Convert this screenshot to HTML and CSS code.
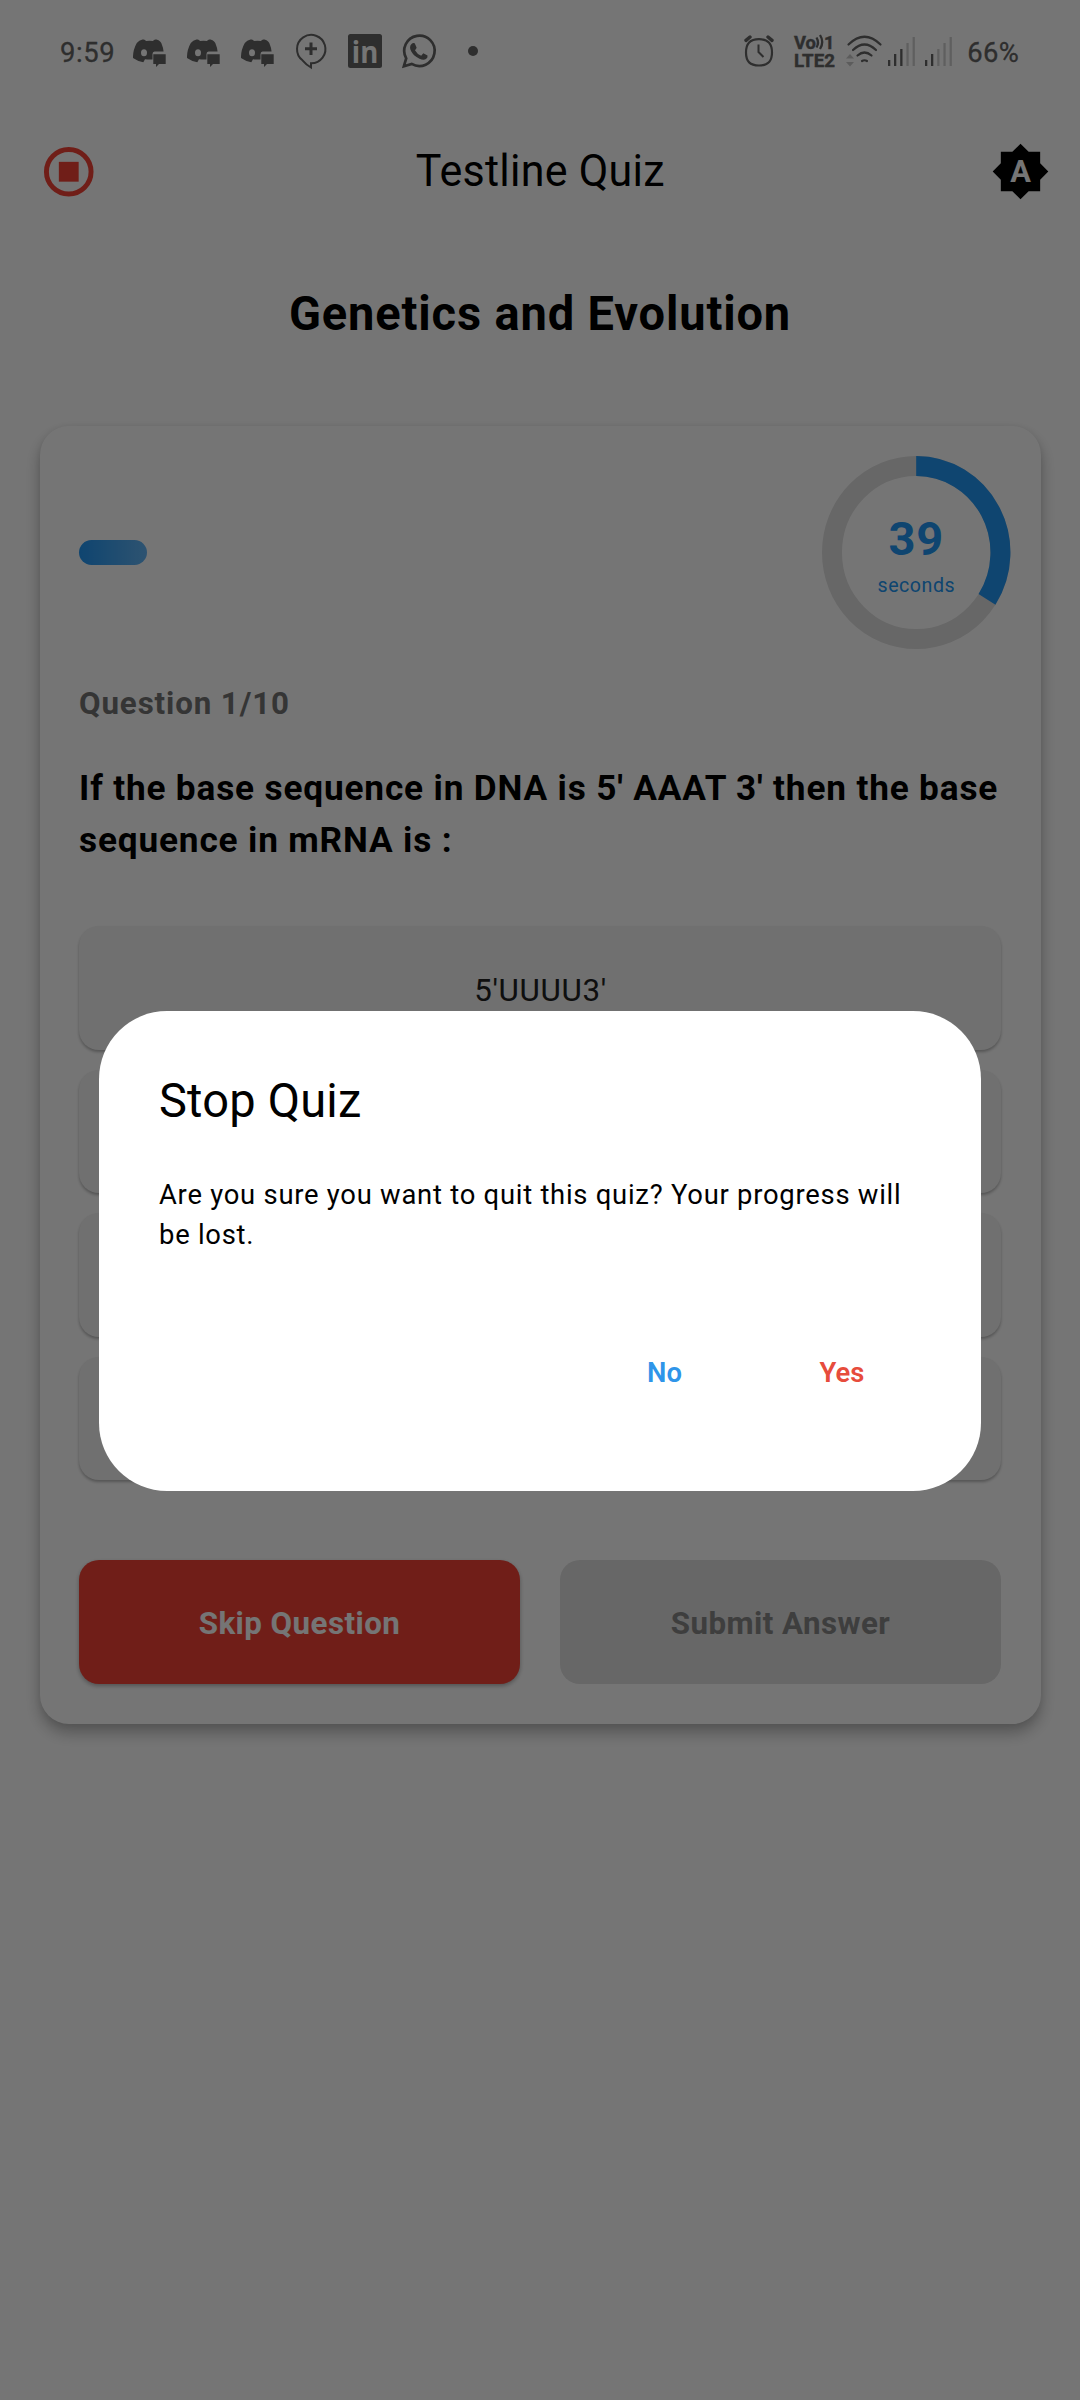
FILE: index.html
```
<!DOCTYPE html>
<html lang="en">
<head>
<meta charset="utf-8">
<title>Testline Quiz</title>
<link rel="stylesheet" href="styles.css">
</head>
<body>
<svg class="defs" width="0" height="0" aria-hidden="true">
  <symbol id="discord" viewBox="0 0 33 28">
    <path fill="currentColor" fill-rule="evenodd" d="M9.500 .6Q12 0 13 2Q16.500 1.500 20 2Q21 0 23.500 .6Q28 1.800 29 6Q30.300 9 30.600 12.500H21.500Q19.500 12.500 19.500 15V20.500Q16 20.800 12 20.300L10.300 23.200Q5 22.500 0 19Q-.2 11 3.800 4Q6 1.500 9.500 .6ZM11 10.300A3 3.500 0 1 0 11 17.300A3 3.500 0 1 0 11 10.300Z"/>
    <path fill="currentColor" d="M20.300 15.200H32.700V25H26L23 28V25H20.300Z"/>
  </symbol>
</svg>

<div class="screen">
  <header class="status">
    <div class="status-group">
      <span class="status-text clock">9:59</span>
      <svg class="discord" width="33" height="28"><use href="#discord"/></svg>
      <svg class="discord" width="33" height="28"><use href="#discord"/></svg>
      <svg class="discord" width="33" height="28"><use href="#discord"/></svg>
      <svg class="bubble" width="32" height="36" viewBox="0 0 32 36">
        <path fill="none" stroke="currentColor" stroke-width="2" d="M16 34.500V30.300A14.200 14.200 0 1 0 7.500 27.300Q11 31.500 16 34.500Z"/>
        <path stroke="currentColor" stroke-width="3" d="M16 9.500V22M10 15.700H22"/>
      </svg>
      <svg class="linkedin" width="34" height="34" viewBox="0 0 34 34">
        <rect width="34" height="34" rx="2.500" fill="currentColor"/>
        <text class="linkedin-text" x="3.800" y="28.700" textLength="26.500" lengthAdjust="spacingAndGlyphs">in</text>
      </svg>
      <svg class="whatsapp" width="34" height="34" viewBox="0 0 34 34">
        <path fill="none" stroke="currentColor" stroke-width="2.700" d="M1.900 32.200L4.200 24.300A15.200 15.200 0 1 1 9.700 29.900Z"/>
        <path fill="currentColor" d="M9.500 10Q11 8.500 12.700 9.300L14.600 13.600Q14.500 14.800 13 16.200Q15 20 19.200 21.700L21.300 19.300L25.500 21.400Q26 23.500 24 25Q21.500 26.500 17.500 24.700Q12 22.300 9.300 17.500Q6.700 13 9.500 10Z"/>
      </svg>
      <svg class="more" width="10" height="10"><circle cx="5" cy="5" r="5" fill="currentColor"/></svg>
    </div>
    <div class="status-group">
      <svg class="alarm" width="30" height="32" viewBox="0 0 30 32" fill="none" stroke="currentColor">
        <path stroke-width="2.200" d="M15 4.200C24 4.200 28 8.500 28 17.500S24 30.500 15 30.500S2 26.500 2 17.500S6 4.200 15 4.200Z"/>
        <path stroke-width="3.400" stroke-linecap="round" d="M2 5.400L6 2M28 5.400L24 2"/>
        <path stroke-width="2" d="M14.500 9.500V17L19.500 22"/>
      </svg>
      <svg class="volte" width="41" height="34" viewBox="0 0 41 34">
        <text class="volte-text" x="0" y="14.500" textLength="22" lengthAdjust="spacingAndGlyphs">Vo</text>
        <path fill="none" stroke="currentColor" stroke-width="2.300" d="M22.500 3.500Q25.500 8.500 22.500 13.500M26 1Q30.500 8 26 15"/>
        <text class="volte-text" x="30" y="14.500">1</text>
        <text class="volte-text" x="0" y="32.500" textLength="41" lengthAdjust="spacingAndGlyphs">LTE2</text>
      </svg>
      <svg class="wifi" width="37" height="32" viewBox="0 0 37 32">
        <path fill="none" stroke="currentColor" stroke-width="2.200" stroke-linecap="round" d="M2.500 9.500Q18.500 -6 34.500 9.500M7 15Q18.500 4 30 15M11.500 20.500Q18.500 14.500 25.500 20.500M16 26Q18.500 24.500 21 26"/>
        <path fill="currentColor" opacity=".35" d="M0 23.500L4 19L8 23.500ZM0 27L4 31.500L8 27Z"/>
      </svg>
      <svg class="signal" width="27" height="30" viewBox="0 0 27 30" fill="currentColor">
        <path d="M0 24h2.300v6H0zM6 18h2.300v12H6zM12.200 13h2.300v17h-2.300z"/>
        <path opacity=".3" d="M18.400 7h2.300v23h-2.300zM24.600 1h2.300v29h-2.300z"/>
      </svg>
      <svg class="signal" width="27" height="30" viewBox="0 0 27 30" fill="currentColor">
        <path d="M0 24h2.300v6H0zM6 18h2.300v12H6z"/>
        <path opacity=".3" d="M12.200 13h2.300v17h-2.300zM18.400 7h2.300v23h-2.300zM24.600 1h2.300v29h-2.300z"/>
      </svg>
      <span class="status-text battery">66%</span>
    </div>
  </header>

  <nav class="appbar">
    <svg class="stop" width="59.500" height="59.500" viewBox="0 0 24 24">
      <circle cx="12" cy="12" r="9" fill="none" stroke="currentColor" stroke-width="2"/>
      <path fill="currentColor" d="M8 8h8v8H8z"/>
    </svg>
    <h1 class="appbar-title">Testline Quiz</h1>
    <svg class="theme" width="59" height="59" viewBox="0 0 24 24">
      <path d="M20 8.690V4h-4.690L12 .69 8.690 4H4v4.690L.69 12 4 15.310V20h4.690L12 23.310 15.310 20H20v-4.690L23.310 12 20 8.690z"/>
      <text class="theme-letter" x="12" y="16.200">A</text>
    </svg>
  </nav>

  <main>
    <h2 class="topic">Genetics and Evolution</h2>
    <section class="card">
      <div class="card-top">
        <div class="progress"></div>
        <div class="timer">
          <svg class="timer-ring" width="188.400" height="193" viewBox="0 0 188.400 193" fill="none" stroke-width="20">
            <ellipse cx="94.200" cy="96.500" rx="84.200" ry="86.500" stroke="#e0e0e0"/>
            <path stroke="#2196f3" d="M94.200 10A84.200 86.500 0 0 1 165 143.400"/>
          </svg>
          <span class="timer-value">39</span>
          <span class="timer-unit">seconds</span>
        </div>
      </div>
      <p class="counter">Question 1/10</p>
      <p class="question">If the base sequence in DNA is 5' AAAT 3' then the base<br>sequence in mRNA is :</p>
      <div class="options">
        <div class="option">5'UUUU3'</div>
        <div class="option"></div>
        <div class="option"></div>
        <div class="option"></div>
      </div>
      <div class="actions">
        <div class="button skip">Skip Question</div>
        <div class="button submit">Submit Answer</div>
      </div>
    </section>
  </main>
</div>

<div class="scrim">
  <div class="dialog" role="dialog">
    <h3 class="dialog-title">Stop Quiz</h3>
    <p class="dialog-text">Are you sure you want to quit this quiz? Your progress will<br>be lost.</p>
    <div class="dialog-actions">
      <span class="text-button no">No</span>
      <span class="text-button yes">Yes</span>
    </div>
  </div>
</div>
</body>
</html>
```
FILE: styles.css
```
* { box-sizing: border-box; }

body {
  margin: 0;
  background: #fff;
  color: #000;
  font-family: Roboto, "Liberation Sans", sans-serif;
}

h1, h2, h3, p { margin: 0; }

svg { display: block; flex: none; overflow: visible; }

.defs { position: absolute; }

.screen {
  width: 1080px;
  height: 2400px;
  overflow: hidden;
}

/* Status bar */
.status {
  height: 102px;
  padding: 0 61px 0 60px;
  display: flex;
  justify-content: space-between;
  align-items: center;
  color: #646464;
}

.status-group { display: flex; align-items: center; }

.status-text {
  padding-top: 3px;
  font-size: 27.4px;
  line-height: 32px;
  -webkit-text-stroke: .3px currentColor;
}

.clock { width: 73px; letter-spacing: .6px; }
.discord { margin: 3px 21px 0 0; }
.bubble { margin-right: 21px; }
.linkedin { margin-right: 20px; }
.linkedin-text { font: 700 31px "Open Sans", sans-serif; fill: #fff; }
.whatsapp { margin-right: 32px; }
.alarm { margin-right: 20px; }
.volte { margin-right: 11px; }
.volte-text { font: 700 18px Roboto, sans-serif; fill: currentColor; stroke: currentColor; stroke-width: .4px; }
.wifi { margin-right: 5px; }
.signal { margin-right: 10px; }
.battery { margin-left: 5px; letter-spacing: .3px; }

/* App bar */
.appbar {
  height: 139px;
  padding: 0 30px 0 39px;
  display: flex;
  justify-content: space-between;
  align-items: center;
}

.stop { color: #f44336; }

.appbar-title {
  margin: 0 9px 3px 0;
  font-size: 43px;
  line-height: 52px;
  font-weight: 400;
  letter-spacing: .26px;
  transform: scaleY(1.05);
}

.theme-letter {
  font: 700 12.500px Roboto, sans-serif;
  text-anchor: middle;
  fill: #fff;
}

.topic {
  margin-top: 43px;
  font-size: 47px;
  line-height: 60px;
  font-weight: 700;
  letter-spacing: .86px;
  text-align: center;
  transform: scaleY(1.03);
}

/* Question card */
.card {
  margin: 82px 39.500px 0;
  padding: 30px 39.500px 40px;
  border-radius: 29px;
  background: #fff;
  box-shadow: 0 9px 15px rgba(0, 0, 0, .27), 0 1px 7px rgba(0, 0, 0, .07);
}

.card-top {
  display: flex;
  justify-content: space-between;
  align-items: center;
  margin-right: -9.500px;
}

.progress {
  width: 68px;
  height: 25px;
  border-radius: 12.500px;
  background: linear-gradient(90deg, #2196f3, #64b5f6);
}

.timer {
  position: relative;
  width: 188.400px;
  height: 193px;
  padding-top: 54.700px;
  display: flex;
  flex-direction: column;
  align-items: center;
  color: #2196f3;
}

.timer-ring { position: absolute; left: 0; top: 0; }

.timer-value {
  font-size: 47px;
  line-height: 55px;
  font-weight: 700;
  letter-spacing: .9px;
}

.timer-unit {
  margin-top: 5.300px;
  font-size: 19.600px;
  line-height: 30px;
  letter-spacing: .53px;
}

.counter {
  margin-top: 35px;
  font-size: 31.300px;
  line-height: 40px;
  font-weight: 700;
  letter-spacing: .88px;
  color: #757575;
}

.question {
  margin-top: 38px;
  font-size: 35.200px;
  line-height: 52px;
  font-weight: 700;
  letter-spacing: .84px;
  white-space: nowrap;
}

.options {
  margin-top: 60px;
  display: grid;
  grid-auto-rows: 123.500px;
  gap: 20px;
}

.option {
  padding: 5px 0 0 1px;
  display: flex;
  align-items: center;
  justify-content: center;
  border-radius: 20px;
  background: #f3f3f3;
  color: #212121;
  font-size: 31.300px;
  letter-spacing: .67px;
  box-shadow: 0 2px 3px rgba(0, 0, 0, .28);
}

.actions {
  margin-top: 80px;
  display: grid;
  grid-template-columns: 1fr 1fr;
  gap: 40px;
}

.button {
  height: 123.500px;
  padding-top: 4px;
  display: flex;
  align-items: center;
  justify-content: center;
  border-radius: 20px;
  font-size: 31.300px;
  font-weight: 700;
  letter-spacing: .44px;
}

.skip {
  background: #f44336;
  color: #fff;
  box-shadow: 0 2px 4px rgba(0, 0, 0, .3);
}

.submit { background: #e0e0e0; color: #888; }

/* Dialog */
.scrim {
  position: absolute;
  inset: 0;
  height: 2400px;
  padding-top: 102px;
  display: flex;
  align-items: center;
  justify-content: center;
  background: rgba(0, 0, 0, .54);
}

.dialog {
  width: 882px;
  height: 480px;
  padding: 60px 59px 0 60px;
  border-radius: 68px;
  background: #fff;
}

.dialog-title {
  font-size: 47px;
  line-height: 60px;
  font-weight: 400;
  letter-spacing: .2px;
  transform: scaleY(1.03);
}

.dialog-text {
  margin-top: 44px;
  font-size: 27.400px;
  line-height: 40px;
  letter-spacing: .75px;
  white-space: nowrap;
}

.dialog-actions {
  margin: 88px 17px 0 0;
  display: flex;
  justify-content: flex-end;
  gap: 51.500px;
}

.text-button {
  width: 126px;
  text-align: center;
  font-size: 27.400px;
  line-height: 60px;
  font-weight: 600;
  letter-spacing: .1px;
}

.no { color: #2f95e9; }
.yes { color: #e74c3c; }
```
